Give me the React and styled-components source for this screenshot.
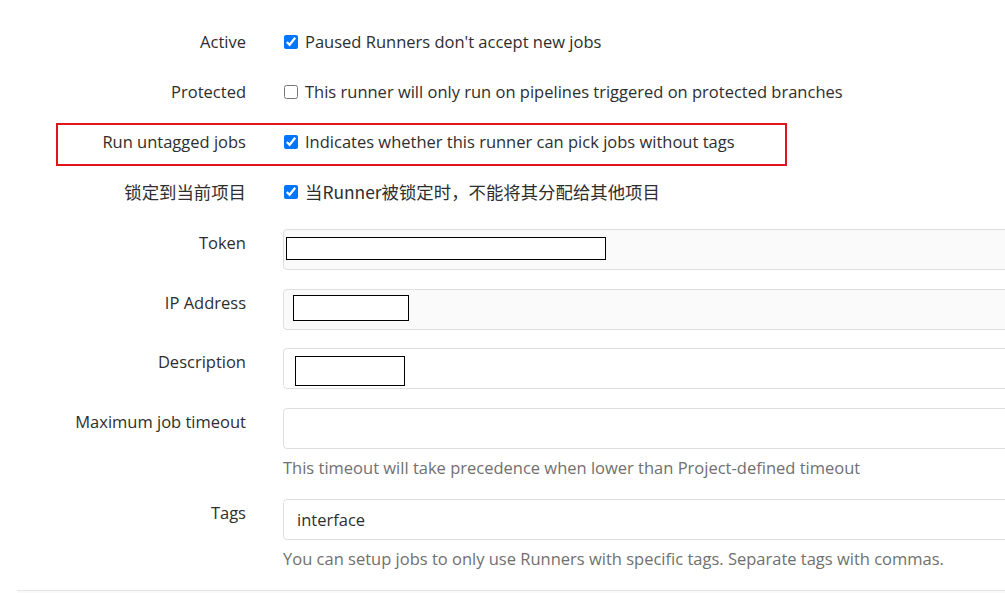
import React from "react";
import styled, { createGlobalStyle } from "styled-components";

const GlobalStyle = createGlobalStyle`
  html, body {
    margin: 0;
    padding: 0;
    background: #fff;
    overflow: hidden;
  }
  body {
    font-family: "Open Sans", "Noto Sans CJK SC", sans-serif;
    font-size: 16.5px;
    color: #2e2e2e;
  }
`;

const Page = styled.div`
  width: 1005px;
  height: 593px;
  overflow: hidden;
  box-sizing: border-box;
  padding-top: 30px;
`;

const Group = styled.div`
  position: relative;
  display: grid;
  grid-template-columns: 246px 800px;
  column-gap: 37px;
  margin-bottom: ${(p) => p.gap}px;
  line-height: 24px;

  ${(p) =>
    p.highlight &&
    `
    &::after {
      content: "";
      position: absolute;
      left: 56px;
      top: -7px;
      width: 731px;
      height: 43px;
      box-sizing: border-box;
      border: 2px solid #e3131b;
      pointer-events: none;
    }
  `}
`;

const Label = styled.div`
  text-align: right;
  white-space: nowrap;
  height: 24px;
  padding-top: ${(p) => (p.field ? 2 : 0)}px;
`;

const Cjk = styled.span`
  font-family: "Noto Sans CJK SC", sans-serif;
  font-size: 17.4px;
  line-height: 24px;
`;

const CheckLine = styled.label`
  display: flex;
  align-items: center;
  gap: 7px;
  height: 24px;
  white-space: nowrap;
`;

const Check = styled.input.attrs({ type: "checkbox" })`
  width: 14px;
  height: 14px;
  margin: 0 0 0 1px;
  accent-color: #0075ff;
`;

const Field = styled.div`
  display: flex;
  align-items: flex-start;
  box-sizing: border-box;
  height: 41px;
  border: 1px solid #dfdfdf;
  border-radius: 4px;
  background: ${(p) => (p.readOnly ? "#fafafa" : "#fff")};
  line-height: 39px;
  padding-left: ${(p) => (p.text ? 13 : 0)}px;
`;

const Redacted = styled.div`
  box-sizing: border-box;
  border: 1px solid #000;
  background: #fff;
  margin-left: ${(p) => p.x}px;
  margin-top: ${(p) => p.y}px;
  width: ${(p) => p.w}px;
  height: ${(p) => p.h}px;
`;

const Help = styled.div`
  margin-top: 7px;
  color: #707070;
  white-space: nowrap;
`;

const Footer = styled.div`
  margin-left: 17px;
  height: 40px;
  border-top: 1px solid #e5e5e5;
  background: #fafafa;
`;

const checks = [
  { label: "Active", text: "Paused Runners don't accept new jobs", checked: true },
  {
    label: "Protected",
    text: "This runner will only run on pipelines triggered on protected branches",
    checked: false,
  },
  {
    label: "Run untagged jobs",
    text: "Indicates whether this runner can pick jobs without tags",
    checked: true,
    highlight: true,
  },
  {
    label: <Cjk>锁定到当前项目</Cjk>,
    text: <Cjk>当Runner被锁定时，不能将其分配给其他项目</Cjk>,
    checked: true,
    gap: 25,
  },
];

export default function App() {
  return (
    <>
      <GlobalStyle />
      <Page>
        {checks.map((c, i) => (
          <Group key={i} gap={c.gap ?? 26} highlight={c.highlight}>
            <Label>{c.label}</Label>
            <CheckLine>
              <Check defaultChecked={c.checked} />
              {c.text}
            </CheckLine>
          </Group>
        ))}

        <Group gap={19}>
          <Label field>Token</Label>
          <Field readOnly>
            <Redacted x={2} y={7} w={320} h={23} />
          </Field>
        </Group>

        <Group gap={18}>
          <Label field>IP Address</Label>
          <Field readOnly>
            <Redacted x={9} y={5} w={116} h={26} />
          </Field>
        </Group>

        <Group gap={19}>
          <Label field>Description</Label>
          <Field>
            <Redacted x={11} y={7} w={110} h={30} />
          </Field>
        </Group>

        <Group gap={19}>
          <Label field>Maximum job timeout</Label>
          <div>
            <Field />
            <Help>This timeout will take precedence when lower than Project-defined timeout</Help>
          </div>
        </Group>

        <Group gap={19}>
          <Label field>Tags</Label>
          <div>
            <Field text>interface</Field>
            <Help>You can setup jobs to only use Runners with specific tags. Separate tags with commas.</Help>
          </div>
        </Group>

        <Footer />
      </Page>
    </>
  );
}
